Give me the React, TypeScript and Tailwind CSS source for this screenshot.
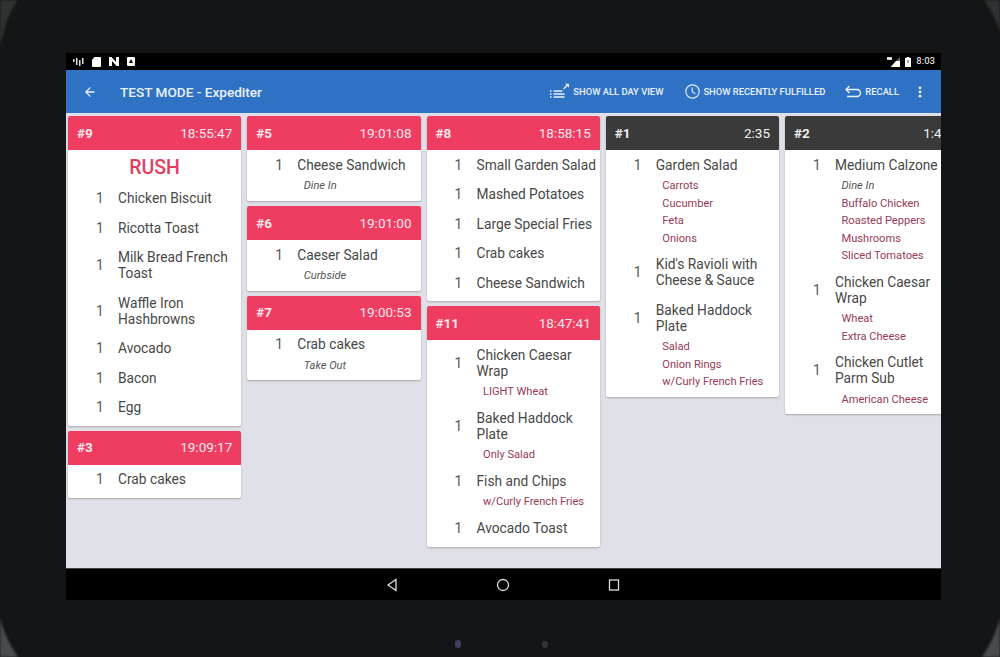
import { ArrowLeft } from "lucide-react";

type Item = { name: string; mods?: string[]; note?: string };
type Ticket = { id: string; time: string; done?: boolean; rush?: boolean; items: Item[] };

const columns: Ticket[][] = [
  [
    {
      id: "#9",
      time: "18:55:47",
      rush: true,
      items: [
        { name: "Chicken Biscuit" },
        { name: "Ricotta Toast" },
        { name: "Milk Bread French Toast" },
        { name: "Waffle Iron Hashbrowns" },
        { name: "Avocado" },
        { name: "Bacon" },
        { name: "Egg" },
      ],
    },
    { id: "#3", time: "19:09:17", items: [{ name: "Crab cakes" }] },
  ],
  [
    { id: "#5", time: "19:01:08", items: [{ name: "Cheese Sandwich", note: "Dine In" }] },
    { id: "#6", time: "19:01:00", items: [{ name: "Caeser Salad", note: "Curbside" }] },
    { id: "#7", time: "19:00:53", items: [{ name: "Crab cakes", note: "Take Out" }] },
  ],
  [
    {
      id: "#8",
      time: "18:58:15",
      items: [
        { name: "Small Garden Salad" },
        { name: "Mashed Potatoes" },
        { name: "Large Special Fries" },
        { name: "Crab cakes" },
        { name: "Cheese Sandwich" },
      ],
    },
    {
      id: "#11",
      time: "18:47:41",
      items: [
        { name: "Chicken Caesar Wrap", mods: ["LIGHT Wheat"] },
        { name: "Baked Haddock Plate", mods: ["Only Salad"] },
        { name: "Fish and Chips", mods: ["w/Curly French Fries"] },
        { name: "Avocado Toast" },
      ],
    },
  ],
  [
    {
      id: "#1",
      time: "2:35",
      done: true,
      items: [
        { name: "Garden Salad", mods: ["Carrots", "Cucumber", "Feta", "Onions"] },
        { name: "Kid's Ravioli with Cheese & Sauce" },
        { name: "Baked Haddock Plate", mods: ["Salad", "Onion Rings", "w/Curly French Fries"] },
      ],
    },
  ],
  [
    {
      id: "#2",
      time: "1:47",
      done: true,
      items: [
        {
          name: "Medium Calzone",
          note: "Dine In",
          mods: ["Buffalo Chicken", "Roasted Peppers", "Mushrooms", "Sliced Tomatoes"],
        },
        { name: "Chicken Caesar Wrap", mods: ["Wheat", "Extra Cheese"] },
        { name: "Chicken Cutlet Parm Sub", mods: ["American Cheese"] },
      ],
    },
  ],
];

function Row({ item }: { item: Item }) {
  return (
    <div>
      <div className="flex items-center py-[6.75px]">
        <span className="w-[50px] shrink-0 pl-[28px] text-[#555]">1</span>
        <span>{item.name}</span>
      </div>
      {(item.note || item.mods) && (
        <div className="mt-[-2.5px] pb-[2.5px] pl-[56.5px] text-[11.1px] leading-[17.5px]">
          {item.note && <div className="italic text-[#555]">{item.note}</div>}
          {item.mods?.map((m) => (
            <div key={m} className="text-[#963a58]">
              {m}
            </div>
          ))}
        </div>
      )}
    </div>
  );
}

function Card({ ticket }: { ticket: Ticket }) {
  return (
    <div className="rounded-[2px] bg-white pb-[3.75px] shadow-[0_1px_2px_rgba(0,0,0,0.25)]">
      <div
        className={`flex h-[34px] items-center justify-between rounded-t-[2px] px-[9px] text-[13.5px] ${
          ticket.done ? "bg-[#3a3a3a] text-[#f0f0f0]" : "bg-[#ef3d62] text-[#fde8ec]"
        }`}
      >
        <span className="font-bold">{ticket.id}</span>
        <span>{ticket.time}</span>
      </div>
      {ticket.rush && (
        <div className="flex h-[33.25px] items-center justify-center pt-[2px] text-[19.5px] font-medium text-[#e0405f]">
          RUSH
        </div>
      )}
      <div className="text-[13.75px] leading-[16px] text-[#484848]">
        {ticket.items.map((item) => (
          <Row key={item.name} item={item} />
        ))}
      </div>
    </div>
  );
}

function StatusIcons() {
  return (
    <div className="flex items-center gap-[8px]">
      <svg width="11" height="9" viewBox="0 0 11 9" fill="#ddd">
        <path d="M0 2h1.500v3H0zM3 1h1.500v7H3zM6 3h1.500v6H6zM9 1h1.500v6H9z" />
      </svg>
      <svg width="9" height="10" viewBox="0 0 9 10" fill="#fff">
        <path d="M2.500 0H8a1 1 0 0 1 1 1v8a1 1 0 0 1-1 1H1a1 1 0 0 1-1-1V3z" />
      </svg>
      <svg width="10" height="9" viewBox="0 0 10 9" fill="#fff">
        <path d="M0 0h2.500L7 5V0h3v9H7.500L3 4v5H0z" />
      </svg>
      <svg width="8" height="9" viewBox="0 0 8 9">
        <rect width="8" height="9" rx="1" fill="#fff" />
        <path d="M2 6l2-4 2 4z" fill="#000" />
      </svg>
    </div>
  );
}

function ActionButton({ icon, label }: { icon: React.ReactNode; label: string }) {
  return (
    <div className="flex items-center gap-[3px] text-[9.4px] font-medium text-[#eaf1fa]">
      {icon}
      <span className="pt-[2px]">{label}</span>
    </div>
  );
}

export default function App() {
  return (
    <div
      className="relative h-[657px] w-[1000px] overflow-hidden bg-[#141516]"
      style={{ fontFamily: "Roboto, 'Liberation Sans', sans-serif" }}
    >
      {/* light catching the tablet's rounded corners */}
      <svg className="absolute inset-0 blur-[1px]" width="1000" height="657" viewBox="0 0 1000 657">
        <path d="M4 0H18Q6 16 0 48V0z" fill="#303132" />
        <path d="M984 0H1000V32Q994 14 984 0z" fill="#303132" />
        <path d="M0 618Q6 640 18 657H0z" fill="#4a4b4c" />
        <path d="M1000 618Q994 640 982 657H1000z" fill="#4a4b4c" />
      </svg>

      <div className="relative h-[657px] pl-[66px] pt-[53px]">
        <div className="flex h-[547px] w-[875px] flex-col overflow-hidden">
          {/* status bar */}
          <div className="flex h-[17px] shrink-0 items-center justify-between bg-black pl-[7px] pr-[6px]">
            <StatusIcons />
            <div className="flex items-center gap-[5px] text-[9.5px] font-medium text-[#ddd]">
              <svg width="13" height="10" viewBox="0 0 13 10" fill="#ddd">
                <path d="M0 0h5v3H0z" />
                <path d="M13 0v10H3z" fill="#666" />
                <path d="M13 4v6H4l5-6z" fill="#fff" />
              </svg>
              <svg width="6" height="10" viewBox="0 0 6 10">
                <path d="M1.500 0h3v1H6v9H0V1h1.500z" fill="#fff" />
                <path d="M2.500 3h1v3h-1z" fill="#555" />
              </svg>
              <span>8:03</span>
            </div>
          </div>

          {/* app bar */}
          <div className="flex h-[43px] shrink-0 items-center bg-[#2f72c4] shadow-[0_1px_2px_rgba(0,0,0,0.25)]">
            <ArrowLeft size={14} strokeWidth={2.2} className="ml-[17px] text-[#eaf1fa]" />
            <span className="ml-[23px] pt-[1px] text-[13.6px] font-medium text-[#eaf1fa]">TEST MODE - Expediter</span>
            <div className="ml-auto flex items-center pr-[19px]">
              <ActionButton
                label="SHOW ALL DAY VIEW"
                icon={
                  <svg width="20" height="17" viewBox="0 0 20 17" fill="none" stroke="#eaf1fa" strokeWidth="1.300">
                    <path d="M0 8h1.500M0 11h1.500M0 14h1.500M3.500 8h9M3.500 11h11M3.500 14h11" />
                    <path d="M13.500 6l4-4" />
                    <path d="M15 .7h4v4z" fill="#eaf1fa" stroke="none" />
                  </svg>
                }
              />
              <div className="ml-[22px]">
                <ActionButton
                  label="SHOW RECENTLY FULFILLED"
                  icon={
                    <svg width="15" height="15" viewBox="0 0 15 15" fill="none" stroke="#dbe7f7" strokeWidth="1.200">
                      <circle cx="7.500" cy="7.500" r="6.700" />
                      <path d="M7.300 3.500v4.300l3 2" />
                    </svg>
                  }
                />
              </div>
              <div className="ml-[20px]">
                <ActionButton
                  label="RECALL"
                  icon={
                    <svg width="17" height="13" viewBox="0 0 17 13" fill="none" stroke="#eaf1fa" strokeWidth="1.400">
                      <path d="M1.500 4.500H12a3.500 3.500 0 0 1 0 7H2" />
                      <path d="M4.500 1L1 4.500 4.500 8" />
                    </svg>
                  }
                />
              </div>
              <svg width="4" height="12" viewBox="0 0 4 12" fill="#eaf1fa" className="ml-[19px]">
                <circle cx="2" cy="1.800" r="1.400" />
                <circle cx="2" cy="6" r="1.400" />
                <circle cx="2" cy="10.200" r="1.400" />
              </svg>
            </div>
          </div>

          {/* tickets */}
          <div className="flex h-[455px] shrink-0 items-start gap-[6px] overflow-hidden bg-[#e0e1e8] pl-[2px] pt-[3px]">
            {columns.map((col, i) => (
              <div key={i} className="flex w-[173.25px] shrink-0 flex-col gap-[5px]">
                {col.map((t) => (
                  <Card key={t.id} ticket={t} />
                ))}
              </div>
            ))}
          </div>

          {/* nav bar */}
          <div className="flex h-[32px] shrink-0 items-center justify-center gap-[97px] border-t border-[#444] bg-black pr-[2px]">
            <svg width="14" height="14" viewBox="0 0 14 14" fill="none" stroke="#ddd" strokeWidth="1.300">
              <path d="M11 1.500v11L3 7z" />
            </svg>
            <svg width="14" height="14" viewBox="0 0 14 14" fill="none" stroke="#ddd" strokeWidth="1.300">
              <circle cx="7" cy="7" r="5.500" />
            </svg>
            <svg width="14" height="14" viewBox="0 0 14 14" fill="none" stroke="#ddd" strokeWidth="1.300">
              <rect x="2.500" y="2" width="9" height="10" />
            </svg>
          </div>
        </div>

        {/* front sensors */}
        <div className="ml-[389px] mt-[40px] flex items-center gap-[81px]">
          <div className="h-[8px] w-[6px] rounded-full bg-[#3c3f58]" />
          <div className="h-[7px] w-[6px] rounded-full bg-[#333437]" />
        </div>
      </div>
    </div>
  );
}
